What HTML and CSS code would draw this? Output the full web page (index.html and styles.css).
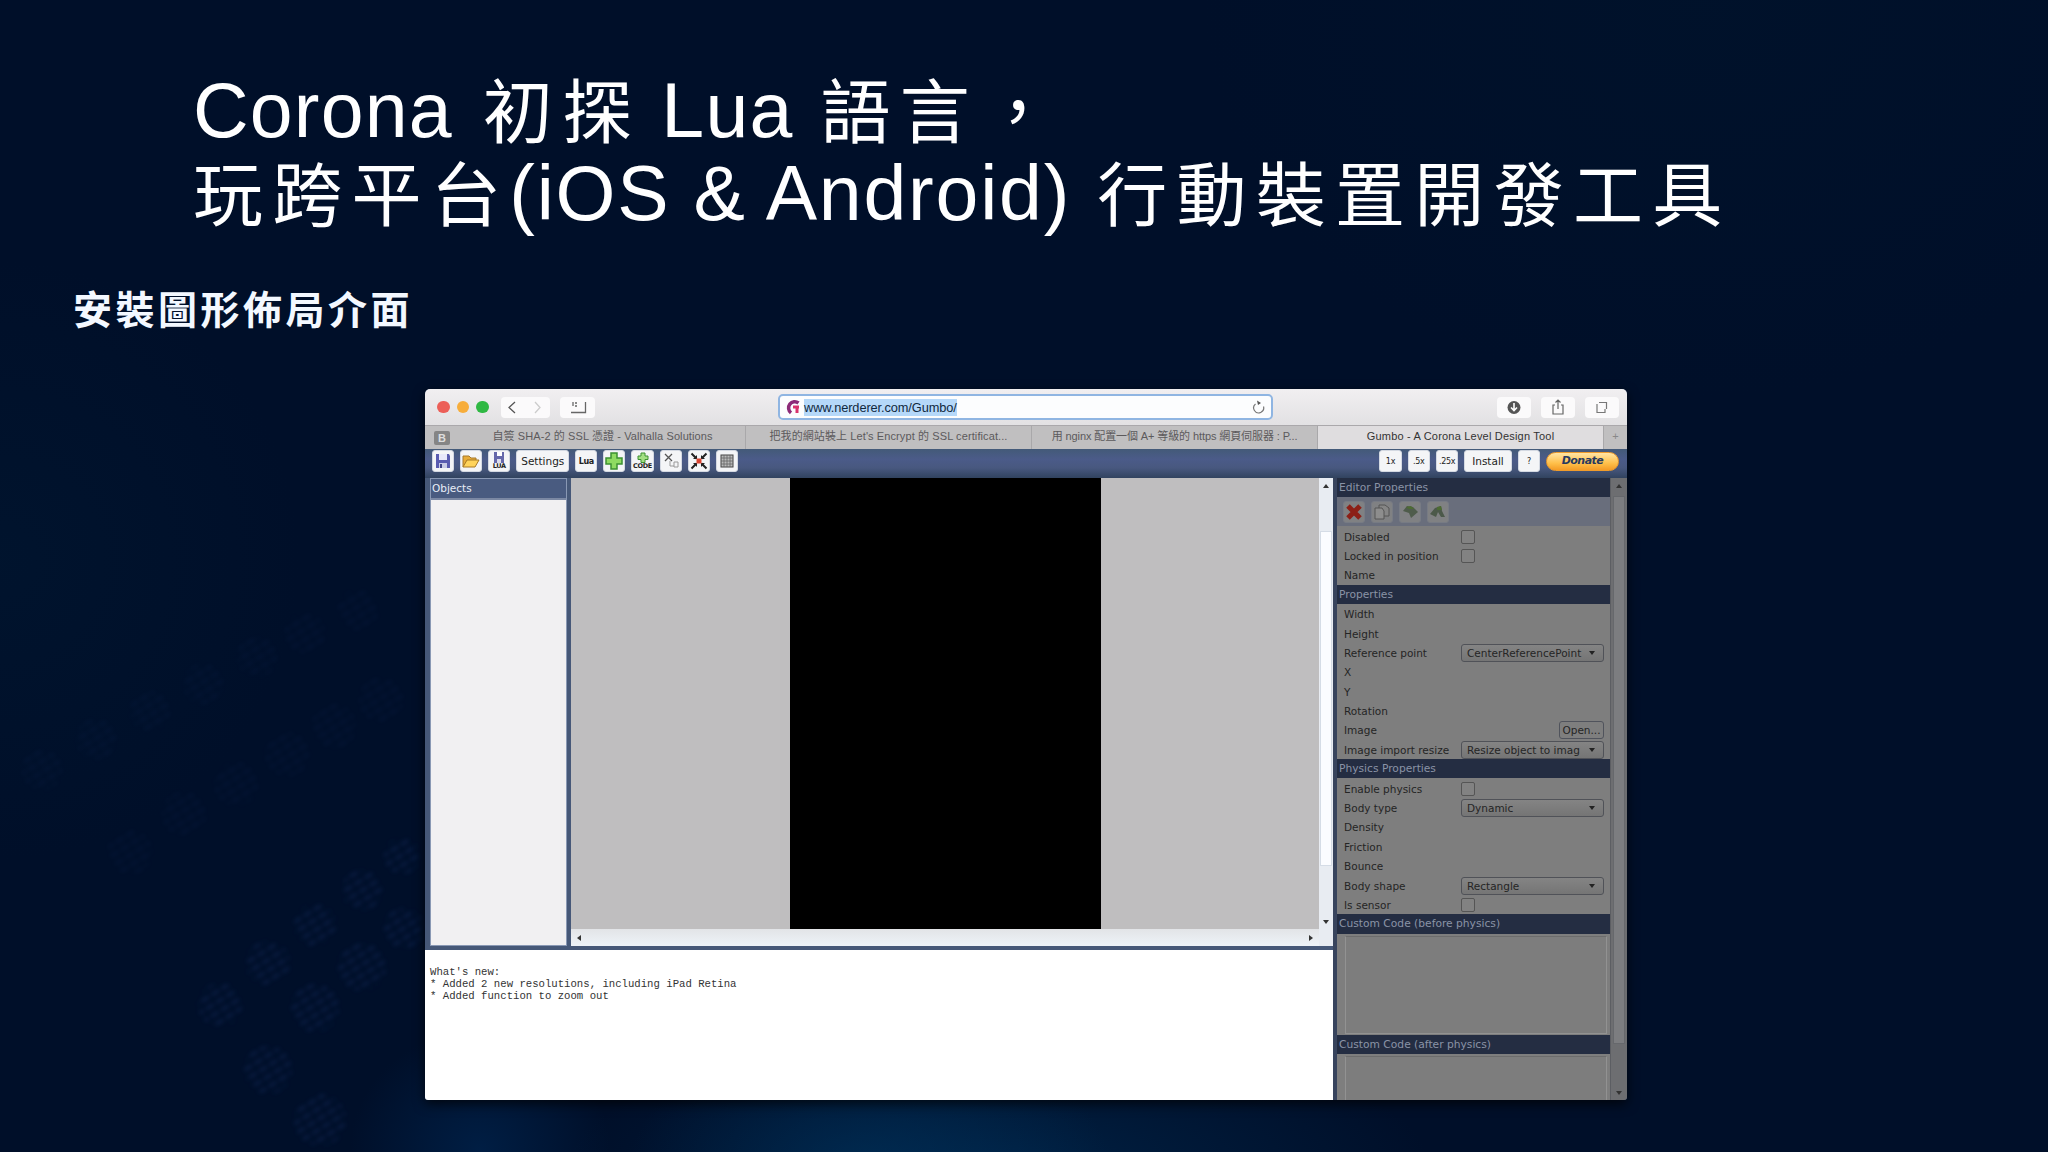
FILE: index.html
```html
<!DOCTYPE html>
<html lang="zh-Hant">
<head>
    <meta charset="UTF-8">
    <meta name="viewport" content="width=device-width, initial-scale=1.0">
    <title>Corona 初探 Lua 語言</title>
    <link rel="stylesheet" href="styles.css">
</head>
<body>

    <!-- Background pattern -->
    <svg class="backdrop" width="2048" height="1152">
        <defs>
            <pattern id="hatch" width="12" height="9" patternUnits="userSpaceOnUse" patternTransform="rotate(-32)">
                <rect width="9" height="4" fill="#1a3470"/>
            </pattern>
            <filter id="soft"><feGaussianBlur stdDeviation="2"/></filter>
        </defs>
        <g fill="url(#hatch)" opacity="0.13" filter="url(#soft)">
            <circle cx="358" cy="610" r="20"/><circle cx="305" cy="633" r="20"/>
            <circle cx="257" cy="657" r="20"/><circle cx="203" cy="684" r="20"/>
            <circle cx="150" cy="711" r="20"/><circle cx="96" cy="739" r="20"/>
            <circle cx="42" cy="770" r="20"/><circle cx="381" cy="700" r="22"/>
            <circle cx="334" cy="726" r="22"/><circle cx="287" cy="754" r="22"/>
            <circle cx="236" cy="784" r="22"/><circle cx="184" cy="814" r="22"/>
            <circle cx="130" cy="852" r="22"/>
        </g>
        <g fill="url(#hatch)" opacity="0.3" filter="url(#soft)">
            <circle cx="402" cy="856" r="18"/><circle cx="362" cy="890" r="20"/>
            <circle cx="315" cy="925" r="21"/><circle cx="268" cy="963" r="22"/>
            <circle cx="220" cy="1005" r="22"/><circle cx="404" cy="928" r="20"/>
            <circle cx="362" cy="967" r="24"/><circle cx="315" cy="1008" r="24"/>
            <circle cx="268" cy="1070" r="24"/><circle cx="320" cy="1120" r="26"/>
        </g>
    </svg>

    <div class="slide">
        <h1 class="title">
            <div class="line"><span class="en corona">Corona</span><span class="zh gap-a">初探</span><span class="en lua">Lua</span><span class="zh gap-b">語言</span><span class="zh comma">，</span></div>
            <div class="line"><span class="zh">玩跨平台</span><span class="en platforms">(iOS &amp; Android)</span><span class="zh gap-c">行動裝置開發工具</span></div>
        </h1>
        <h2 class="subtitle">安裝圖形佈局介面</h2>

        <!-- Browser window -->
        <div class="window">
            <div class="titlebar">
                <div class="dots"><i class="red"></i><i class="yellow"></i><i class="green"></i></div>
                <div class="pill nav">
                    <svg width="48" height="20"><path d="M14 5L8 10.500L14 16" fill="none" stroke="#555" stroke-width="1.300"/><path d="M34 5L39 10.500L34 16" fill="none" stroke="#ccc" stroke-width="1.300"/></svg>
                </div>
                <div class="pill side">
                    <svg width="35" height="20"><path d="M25.500 5V15.500H11M13 5V9M15 6H17M15 9H17" fill="none" stroke="#666" stroke-width="1.300"/></svg>
                </div>
                <div class="address">
                    <svg width="16" height="16"><path d="M13.500 4A6 6 0 1 0 6 13.800" fill="none" stroke="#8c2a78" stroke-width="3.500"/><path d="M8 8H14M12 8V14" stroke="#d8326c" stroke-width="3"/></svg>
                    <span class="url">www.nerderer.com/Gumbo/</span>
                    <svg class="reload" width="14" height="16"><path d="M3.500 5A5 5 0 1 0 11.500 7.500" fill="none" stroke="#777" stroke-width="1.200"/><path d="M5 1.500L9 4L6 6Z" fill="#555"/></svg>
                </div>
                <div class="actions">
                    <div class="pill"><svg width="34" height="20"><circle cx="17" cy="10.500" r="6.500" fill="#555"/><path d="M17 6V13M14 10.500L17 13.500L20 10.500" fill="none" stroke="#fff" stroke-width="1.600"/></svg></div>
                    <div class="pill"><svg width="34" height="20"><path d="M14 8H12V17H22V8H20M17 12V3M14.500 5.500L17 3L19.500 5.500" fill="none" stroke="#666" stroke-width="1.200"/></svg></div>
                    <div class="pill"><svg width="34" height="20"><path d="M12 7V15.500H20V12M14 5.500H21.500V12" fill="none" stroke="#777" stroke-width="1.200"/></svg></div>
                </div>
            </div>

            <div class="tabs">
                <div class="pinned"><b>B</b></div>
                <div class="tab"><span class="t1">自簽 SHA-2 的 SSL 憑證 - Valhalla Solutions</span></div>
                <div class="tab"><span class="t2">把我的網站裝上 Let's Encrypt 的 SSL certificat...</span></div>
                <div class="tab"><span class="t3">用 nginx 配置一個 A+ 等級的 https 網頁伺服器 : P...</span></div>
                <div class="tab active"><span class="t4">Gumbo - A Corona Level Design Tool</span></div>
                <div class="add">+</div>
            </div>

            <div class="toolbar">
                <div class="btn"><svg width="16" height="16"><path d="M1 1H14L15 3V15H1Z" fill="#5a5cb0"/><rect x="4" y="1" width="8" height="6" fill="#e8e8fa"/><rect x="4" y="10" width="8" height="5" fill="#c9cbe6"/><rect x="5" y="11" width="2" height="4" fill="#404488"/></svg></div>
                <div class="btn"><svg width="18" height="16"><path d="M1 14V3H7L9 5H14V8" fill="#e8ac38" stroke="#a5782c"/><path d="M1 14L5 7H17L13 14Z" fill="#ffd45c" stroke="#a87a25"/></svg></div>
                <div class="btn stack"><svg width="12" height="11"><path d="M1 0H11V11H1Z" fill="#6668aa"/><rect x="4" y="0" width="5" height="4" fill="#fff"/><rect x="4" y="7" width="4" height="4" fill="#dde"/></svg><b>LUA</b></div>
                <div class="btn wide">Settings</div>
                <div class="btn lua-btn">Lua</div>
                <div class="btn"><svg width="18" height="18"><path d="M6 1H12V6H17V12H12V17H6V12H1V6H6Z" fill="#8fdb62" stroke="#3c9132" stroke-width="1.500"/></svg></div>
                <div class="btn stack"><svg width="12" height="11"><path d="M4 1H8V4H11V7.500H8V10.500H4V7.500H1V4H4Z" fill="#a3df83" stroke="#3c9132"/></svg><b>CODE</b></div>
                <div class="btn"><svg width="18" height="18"><path d="M3 2L10 9M10 2L3 9" stroke="#555" stroke-width="1.300"/><path d="M8 9V14H12M12 10H16V15H12Z" fill="none" stroke="#999"/></svg></div>
                <div class="btn"><svg width="18" height="18"><path d="M1.500 1.500L6.500 6.500M16.500 1.500L11.500 6.500M1.500 16.500L6.500 11.500M16.500 16.500L11.500 11.500" stroke="#222" stroke-width="2"/><path d="M7 3V7H3ZM11 3V7H15ZM7 15V11H3ZM11 15V11H15Z" fill="#222"/><rect x="6.500" y="6.500" width="5" height="5" fill="#d94432"/></svg></div>
                <div class="btn"><svg width="14" height="14"><rect x="1" y="1" width="12" height="12" fill="#bbb" stroke="#444"/><path d="M4 1V13M7 1V13M10 1V13M1 4H13M1 7H13M1 10H13" stroke="#666" stroke-width="0.800"/></svg></div>
                <div class="btn small first-right">1x</div>
                <div class="btn small">.5x</div>
                <div class="btn small">.25x</div>
                <div class="btn install">Install</div>
                <div class="btn small">?</div>
                <div class="donate">Donate</div>
            </div>

            <div class="app">
                <div class="main">
                    <div class="work">
                        <div class="objects">
                            <div class="objects-head">Objects</div>
                            <div class="objects-list"></div>
                        </div>
                        <div class="canvas">
                            <div class="canvas-view"><div class="phone"></div></div>
                            <div class="vscroll"><span class="arrow up"></span><div class="vthumb"></div><span class="arrow down"></span></div>
                            <div class="hscroll"><span class="arrow left"></span><span class="arrow right"></span></div>
                            <div class="corner"></div>
                        </div>
                    </div>
                    <pre class="console">What's new:
* Added 2 new resolutions, including iPad Retina
* Added function to zoom out</pre>
                </div>

                <div class="props">
                    <div class="head">Editor Properties</div>
                    <div class="strip">
                        <div class="mini"><svg width="16" height="16"><path d="M2 2L14 14M14 2L2 14" stroke="#8c1f16" stroke-width="5"/></svg></div>
                        <div class="mini"><svg width="18" height="18"><path d="M6 2H12L16 5V13H6Z" fill="#858585" stroke="#555"/><path d="M2 5H9L11 8V16H2Z" fill="#8d8d8d" stroke="#555"/></svg></div>
                        <div class="mini"><svg width="18" height="18"><path d="M2 8L6 3L12 4L17 9L10 15L8 10Z" fill="#4f5c4b"/><path d="M5 4L10 3L13 6H8Z" fill="#4d6b33"/></svg></div>
                        <div class="mini"><svg width="18" height="18"><path d="M1 11L6 5L12 3L13 8L16 14H12L9 9L7 14Z" fill="#4c594a"/><path d="M8 4L12 3L13 7H8Z" fill="#4d6b33"/></svg></div>
                    </div>
                    <div class="row"><span>Disabled</span><i class="check"></i></div>
                    <div class="row"><span>Locked in position</span><i class="check"></i></div>
                    <div class="row"><span>Name</span></div>
                    <div class="head">Properties</div>
                    <div class="row"><span>Width</span></div>
                    <div class="row"><span>Height</span></div>
                    <div class="row"><span>Reference point</span><div class="select">CenterReferencePoint</div></div>
                    <div class="row"><span>X</span></div>
                    <div class="row"><span>Y</span></div>
                    <div class="row"><span>Rotation</span></div>
                    <div class="row"><span>Image</span><div class="open">Open...</div></div>
                    <div class="row"><span>Image import resize</span><div class="select">Resize object to imag</div></div>
                    <div class="head">Physics Properties</div>
                    <div class="row"><span>Enable physics</span><i class="check"></i></div>
                    <div class="row"><span>Body type</span><div class="select">Dynamic</div></div>
                    <div class="row"><span>Density</span></div>
                    <div class="row"><span>Friction</span></div>
                    <div class="row"><span>Bounce</span></div>
                    <div class="row"><span>Body shape</span><div class="select">Rectangle</div></div>
                    <div class="row"><span>Is sensor</span><i class="check"></i></div>
                    <div class="head">Custom Code (before physics)</div>
                    <div class="code"></div>
                    <div class="head">Custom Code (after physics)</div>
                    <div class="code last"></div>
                </div>
                <div class="props-scroll"><span class="arrow up"></span><div class="props-thumb"></div><span class="arrow down"></span></div>
            </div>
        </div>
    </div>

</body>
</html>
```
FILE: styles.css
```css
* {
    margin: 0;
    padding: 0;
    box-sizing: border-box;
}

body {
    width: 2048px;
    height: 1152px;
    overflow: hidden;
    font-family: "Liberation Sans", "Noto Sans CJK TC", sans-serif;
    background:
        radial-gradient(ellipse 240px 130px at 870px 1165px, rgba(0, 56, 100, 0.5), transparent),
        radial-gradient(ellipse 430px 130px at 1000px 1165px, rgba(0, 44, 84, 0.6), transparent),
        radial-gradient(ellipse 130px 120px at 480px 1150px, rgba(0, 38, 82, 0.65), transparent),
        radial-gradient(ellipse 500px 400px at 1700px 0, rgba(0, 26, 48, 0.25), transparent),
        radial-gradient(ellipse 300px 300px at 0 560px, rgba(0, 24, 50, 0.5), transparent),
        #000f29;
}

.backdrop {
    position: absolute;
    left: 0;
    top: 0;
}

.slide {
    position: relative;
    padding-top: 69px;
}

/* Headings */
.title {
    padding-left: 193px;
    color: #fff;
    font-size: 77px;
    font-weight: 400;
    line-height: 83px;
}

.line {
    display: flex;
    height: 83px;
    white-space: nowrap;
}

.en {
    letter-spacing: 1.2px;
}

.zh {
    font-size: 70px;
    font-weight: 400;
    letter-spacing: 9.3px;
    padding-top: 4px;
}

.platforms {
    margin-left: -1px;
    letter-spacing: 1.8px;
}

.gap-a {
    margin-left: 30px;
}

.lua {
    margin-left: 20px;
}

.gap-b {
    margin-left: 27px;
}

.comma {
    margin-left: 4px;
}

.gap-c {
    margin-left: 26px;
}

.subtitle {
    margin-top: 51px;
    padding-left: 73px;
    height: 50px;
    line-height: 50px;
    font-size: 39px;
    font-weight: 700;
    letter-spacing: 3.5px;
    color: #f3f8ff;
}

/* Browser window */
.window {
    width: 1202px;
    height: 711px;
    margin: 53px 0 0 425px;
    border-radius: 5px 5px 3px 3px;
    overflow: hidden;
    background: #465878;
    box-shadow: 0 4px 12px rgba(0, 0, 0, 0.7);
}

.titlebar {
    display: flex;
    align-items: center;
    height: 36px;
    padding: 0 8px 0 12px;
    background: linear-gradient(#f1eff1, #e2e1e3);
}

.dots {
    display: flex;
    gap: 7px;
    width: 64px;
}

.dots i {
    width: 12.5px;
    height: 12.5px;
    border-radius: 50%;
}

.red { background: #ec5f58; }
.yellow { background: #f7ad3b; }
.green { background: #2fb843; }

.pill {
    height: 21px;
    border-radius: 4px;
    background: #fbfafb;
}

.pill svg {
    display: block;
}

.nav {
    width: 49px;
}

.side {
    width: 35px;
    margin-left: 10px;
}

.address {
    display: flex;
    align-items: center;
    width: 495px;
    height: 26px;
    margin-left: 183px;
    padding: 0 5px;
    border: 2px solid #8fb5e2;
    border-radius: 5px;
    background: #fcfdfe;
    font-size: 12.8px;
}

.url {
    margin-left: 3px;
    letter-spacing: -0.1px;
    line-height: 17px;
    background: #b5d8f9;
    color: #10283e;
}

.reload {
    margin-left: auto;
}

.actions {
    display: flex;
    gap: 10px;
    margin-left: auto;
}

.actions .pill {
    width: 34px;
}

/* Tabs */
.tabs {
    display: flex;
    height: 24px;
    border-top: 1px solid #aaa8ab;
    background: #c0bfc0;
    color: #5c5a5c;
    font-size: 11px;
    line-height: 21px;
}

.pinned {
    display: flex;
    align-items: center;
    width: 35px;
    padding-left: 9px;
}

.pinned b {
    width: 16px;
    height: 14px;
    border-radius: 2px;
    background: #858585;
    color: #ddd;
    line-height: 14px;
    text-align: center;
}

.tab {
    width: 286px;
    border-right: 1px solid #a9a8aa;
    text-align: center;
    white-space: nowrap;
}

.tab:first-of-type {
    border-right: 0;
}

.active {
    background: #dfdddf;
    color: #333;
}

.add {
    flex: 1;
    text-align: center;
    color: #888;
}

.t1 { letter-spacing: 0.1px; }
.t2 { letter-spacing: 0.1px; }
.t3 { letter-spacing: -0.1px; }
.t4 { letter-spacing: 0.2px; }

/* Toolbar */
.toolbar {
    display: flex;
    gap: 6px;
    height: 29px;
    padding: 1px 8px 0 7px;
    background: linear-gradient(#435a78, #4b5b89 35%, #48587f 65%, #31435f);
    font-family: "DejaVu Sans", sans-serif;
}

.btn {
    display: flex;
    align-items: center;
    justify-content: center;
    flex: none;
    width: 22.1px;
    height: 22px;
    border: 1px solid #d4d9e2;
    border-radius: 3px;
    background: #f4f5f7;
    color: #222;
    font-size: 10.5px;
}

.wide {
    width: 53px;
}

.small,
.lua-btn {
    font-size: 8px;
    letter-spacing: -0.3px;
}

.small {
    width: 22.3px;
}

.lua-btn {
    font-weight: bold;
}

.stack {
    flex-direction: column;
}

.stack b {
    font-size: 6.5px;
    line-height: 7px;
    letter-spacing: -0.3px;
}

.first-right {
    margin-left: auto;
}

.install {
    width: 47.5px;
}

.donate {
    width: 73px;
    height: 19px;
    margin-top: 2px;
    border: 1px solid #ef9c2c;
    border-radius: 10px;
    background: linear-gradient(#ffe5a5, #ffc04a 60%, #f49c26);
    color: #273a60;
    font: italic bold 11px/16px "DejaVu Sans", sans-serif;
    letter-spacing: -0.5px;
    text-align: center;
}

/* Application */
.app {
    display: flex;
    height: 622px;
    font-family: "DejaVu Sans", sans-serif;
    font-size: 10.5px;
}

.main {
    width: 908px;
}

.work {
    display: flex;
    gap: 4px;
    height: 468px;
    padding-left: 5px;
}

.objects {
    width: 137px;
    border: 1px solid #8998b4;
}

.objects-head {
    height: 21px;
    padding-left: 1px;
    background: #495b80;
    border-bottom: 2px solid #7b88a3;
    color: #e8edf7;
    line-height: 18px;
}

.objects-list {
    height: 445px;
    background: #f1f0f2;
}

.canvas {
    display: grid;
    grid-template-columns: 1fr 14px;
    grid-template-rows: 1fr 17px;
    flex: 1;
}

.canvas-view {
    background: #bfbebf;
    padding-left: 219px;
}

.phone {
    width: 311px;
    height: 451px;
    background: #000;
}

.vscroll,
.hscroll,
.corner {
    background: #e8ecf2;
}

.vscroll,
.props-scroll {
    display: flex;
    flex-direction: column;
    align-items: center;
    padding: 6px 0 5px;
}

.vthumb {
    width: 12px;
    height: 335px;
    margin: 43px 0 auto;
    border: 1px solid #d5dce6;
    background: #fbfcff;
}

.hscroll {
    display: flex;
    align-items: center;
    justify-content: space-between;
    padding: 0 6px;
    background: linear-gradient(#e2e4e7, #eef3f8);
}

.arrow {
    border: 3px solid transparent;
}

.up { border-bottom: 4px solid #333; border-top: 0; }
.down { border-top: 4px solid #333; border-bottom: 0; }
.left { border-right: 4px solid #333; border-left: 0; }
.right { border-left: 4px solid #333; border-right: 0; }

.console {
    height: 150px;
    margin-top: 4px;
    padding: 16px 0 0 5px;
    background: #fff;
    color: #333;
    font: 10.65px/12.1px "Liberation Mono", monospace;
}

/* Properties panel, dimmed */
.props {
    width: 277px;
    border-left: 4px solid #38445d;
    background: #7e7e7e;
    color: #252525;
    overflow: hidden;
}

.head {
    height: 19.4px;
    padding-left: 2px;
    background: #242d42;
    color: #8a93a6;
    font-size: 10.7px;
    line-height: 19px;
}

.strip {
    display: flex;
    gap: 6px;
    height: 29px;
    padding: 4px 6px;
    background: #696e7c;
}

.mini {
    display: flex;
    align-items: center;
    justify-content: center;
    width: 22px;
    height: 22px;
    border: 1px solid #777b84;
    border-radius: 3px;
    background: #808183;
}

.row {
    display: flex;
    align-items: center;
    height: 19.4px;
    padding: 1px 6px 0 7px;
}

.row span {
    width: 117px;
    white-space: nowrap;
}

.check {
    width: 14px;
    height: 14px;
    border: 1px solid #555;
    border-radius: 2px;
    background: #828282;
}

.select {
    position: relative;
    width: 143px;
    height: 18px;
    padding-left: 5px;
    border: 1px solid #505258;
    border-radius: 3px;
    background: linear-gradient(#848484, #757575);
    line-height: 16px;
    white-space: nowrap;
}

.select::after {
    content: "";
    position: absolute;
    right: 8px;
    top: 6px;
    border: 3px solid transparent;
    border-top: 4px solid #222;
    border-bottom: 0;
}

.open {
    width: 45px;
    height: 18px;
    margin-left: auto;
    border: 1px solid #50535c;
    border-radius: 3px;
    line-height: 16px;
    text-align: center;
}

.code {
    height: 98px;
    margin: 2px 3px 1px 8px;
    border: 1px solid #929292;
    border-top-color: #6c6c6c;
    background: #7d7d7d;
}

.props-scroll {
    flex: 1;
    background: #6d6e71;
    border-left: 1px solid #5c5e63;
}

.props-thumb {
    width: 12px;
    height: 548px;
    margin: 8px 0 auto;
    border: 1px solid #66686c;
    background: #7c7d80;
}
```
